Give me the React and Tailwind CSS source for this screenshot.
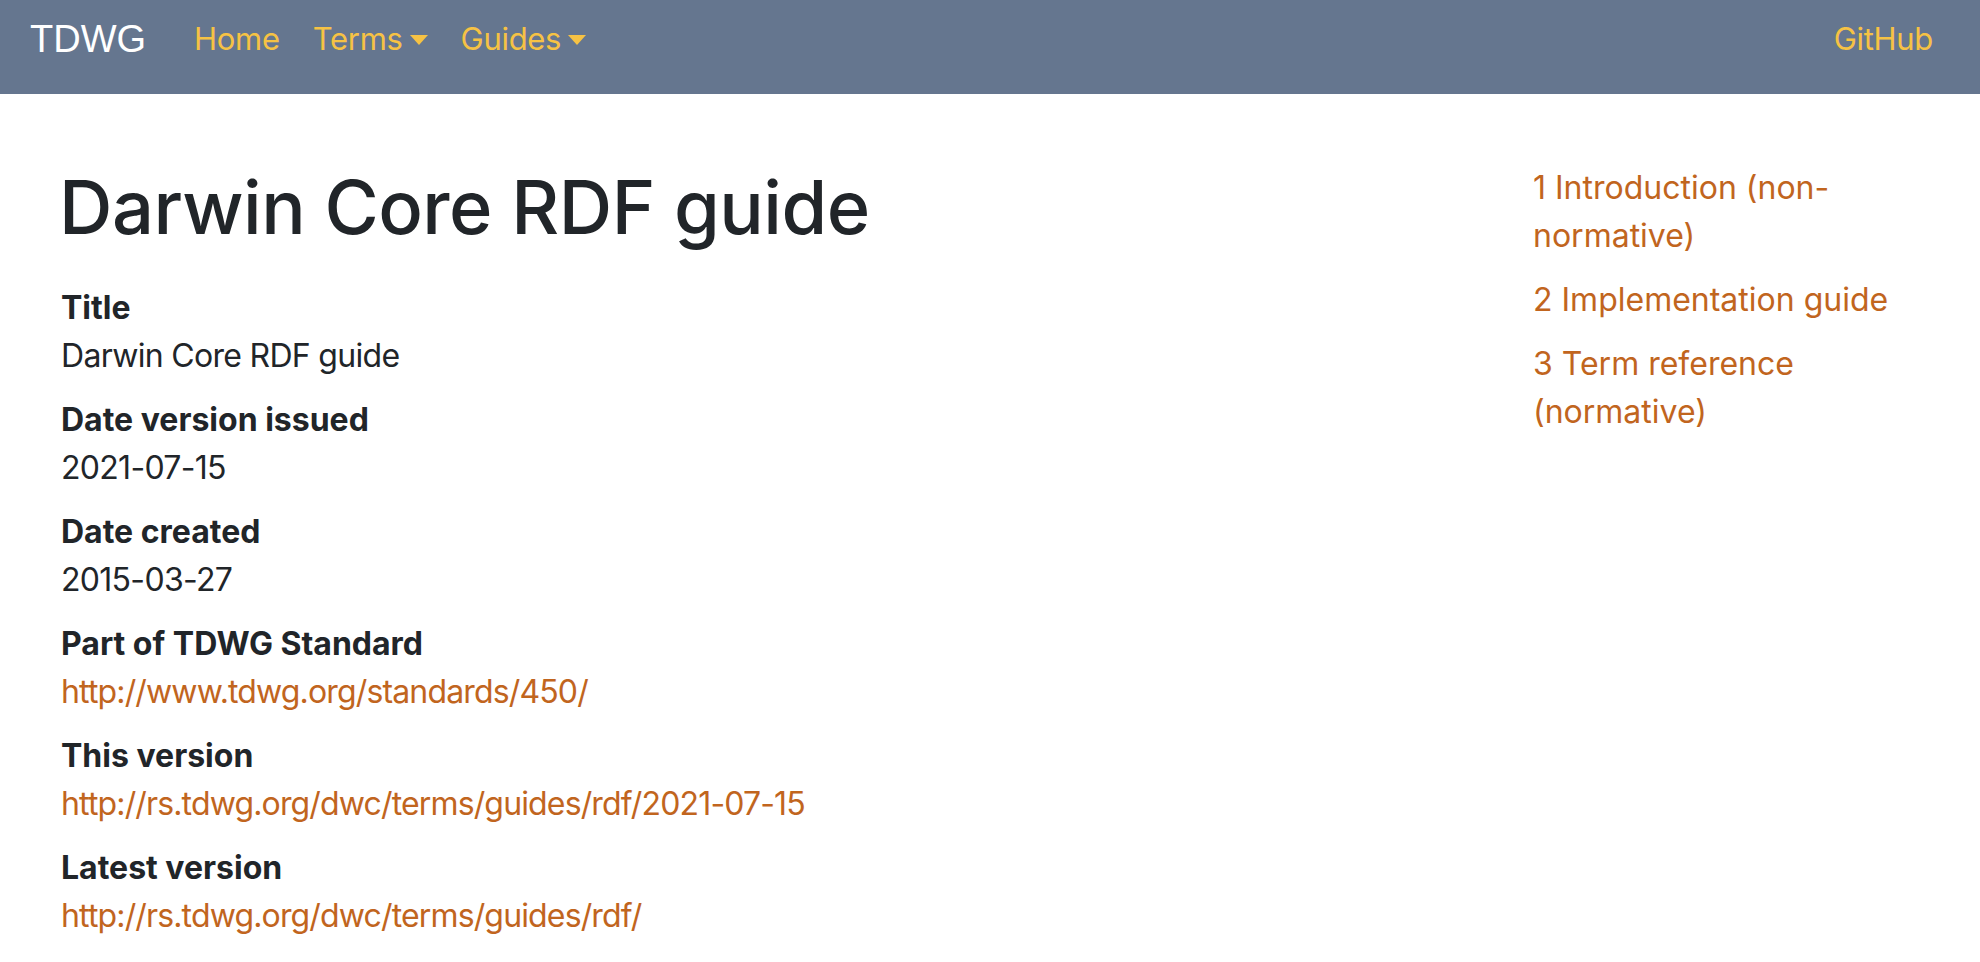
import React from "react";

// TDWG guide page: navbar + metadata list + table of contents
const META = [
  { label: "Title", value: "Darwin Core RDF guide" },
  { label: "Date version issued", value: "2021-07-15" },
  { label: "Date created", value: "2015-03-27" },
  { label: "Part of TDWG Standard", value: "http://www.tdwg.org/standards/450/", link: true },
  { label: "This version", value: "http://rs.tdwg.org/dwc/terms/guides/rdf/2021-07-15", link: true },
  { label: "Latest version", value: "http://rs.tdwg.org/dwc/terms/guides/rdf/", link: true },
];

const TOC = [
  "1 Introduction (non-normative)",
  "2 Implementation guide",
  "3 Term reference (normative)",
];

const Caret = () => (
  <span className="inline-block ml-[7px] align-[5px] w-0 h-0 border-t-[10px] border-t-[#f6c244] border-x-[9.5px] border-x-transparent" />
);

const App = () => {
  return (
    <div className="min-h-screen bg-white text-[#212529] text-[32px] leading-[48px] font-['Inter','Noto_Sans',sans-serif]">
      {/* --- Navbar --- */}
      <nav className="h-[94px] bg-[#65768f] flex items-start pt-[15px] pl-[30px] pr-[47px]">
        <span className="text-white text-[38px] leading-[48px] font-['Liberation_Sans',Arial,sans-serif] mr-[48px]">
          TDWG
        </span>
        <div className="flex items-start gap-[33px] text-[#f6c244] text-[31px] tracking-[-0.3px]">
          <a>Home</a>
          <a>
            Terms
            <Caret />
          </a>
          <a>
            Guides
            <Caret />
          </a>
        </div>
        <a className="ml-auto text-[#f6c244] text-[31px] tracking-[-0.3px]">GitHub</a>
      </nav>

      {/* --- Body --- */}
      <div className="flex pt-[69px]">
        <main className="flex-1 pl-[61px]">
          <h1 className="text-[74px] leading-[88px] font-medium tracking-[-0.5px] -ml-[2px] mb-[33px]">
            Darwin Core RDF guide
          </h1>
          <dl>
            {META.map((m, i) => (
              <div key={i} className="mb-[16px]">
                <dt className="font-bold">{m.label}</dt>
                <dd className={m.link ? "tracking-[-0.85px] text-[#c1651e]" : "tracking-[-0.7px]"}>{m.value}</dd>
              </div>
            ))}
          </dl>
        </main>
        <aside className="w-[400px] mr-[47px] pt-[1px] shrink-0">
          <ul className="flex flex-col gap-[16px] text-[#c1651e]">
            {TOC.map((t, i) => (
              <li key={i}>
                <a>{t}</a>
              </li>
            ))}
          </ul>
        </aside>
      </div>
    </div>
  );
};

export default App;
